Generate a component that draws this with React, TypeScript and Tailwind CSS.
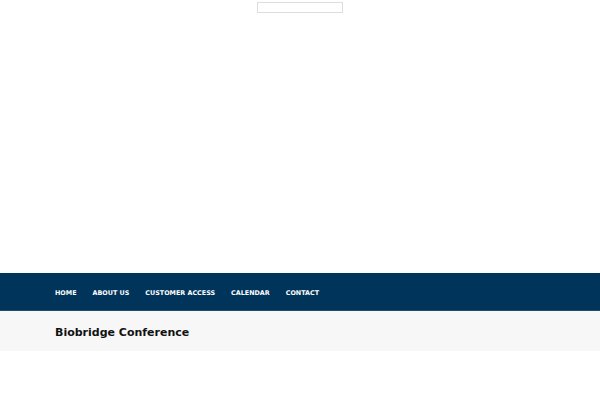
export default function App() {
  return (
    <div className="min-h-[400px] bg-white font-['DejaVu_Sans',sans-serif]">
      <div className="flex h-[273px] justify-center pt-[2px]">
        <div className="h-[11px] w-[86px] border border-[#dddddd] bg-white" />
      </div>
      <nav className="flex h-[38px] items-center gap-[16px] border-b border-[#1f4a6e] bg-[#00345b] px-[55px] pt-[5px]">
        <a className="text-[6.4px] font-bold text-white">HOME</a>
        <a className="text-[6.4px] font-bold text-white">ABOUT US</a>
        <a className="text-[6.4px] font-bold text-white">CUSTOMER ACCESS</a>
        <a className="text-[6.4px] font-bold text-white">CALENDAR</a>
        <a className="text-[6.4px] font-bold text-white">CONTACT</a>
      </nav>
      <div className="flex h-[40px] items-center bg-[#f7f7f7] px-[55px] pt-[4px]">
        <h1 className="text-[11px] font-bold text-[#111111]">Biobridge Conference</h1>
      </div>
    </div>
  );
}
